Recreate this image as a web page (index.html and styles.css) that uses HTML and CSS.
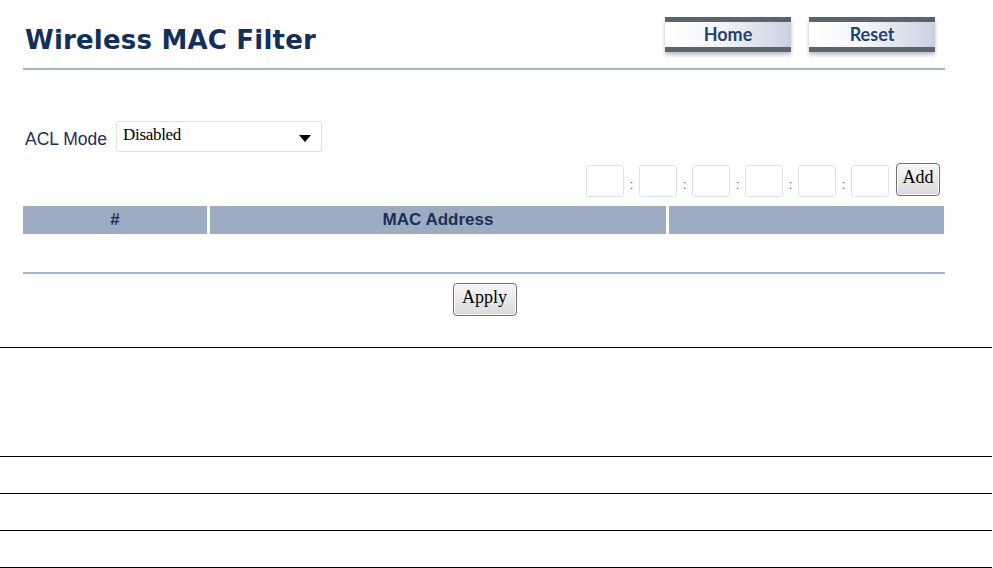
FILE: index.html
```html
<!DOCTYPE html>
<html lang="en">
<head>
<meta charset="utf-8">
<title>Wireless MAC Filter</title>
<link rel="stylesheet" href="styles.css">
</head>
<body>
<div class="page">
  <div class="header">
    <h1 class="title">Wireless MAC Filter</h1>
    <div class="nav">
      <a class="navbtn">Home</a>
      <a class="navbtn">Reset</a>
    </div>
  </div>

  <div class="acl">
    <span class="acl-label">ACL Mode</span>
    <div class="select">
      <span class="select-text">Disabled</span>
      <svg class="select-arrow" width="12" height="7" viewBox="0 0 12 7"><path d="M0 0 H12 L6 7 Z" fill="#000"/></svg>
    </div>
  </div>

  <div class="macrow">
    <span class="macbox"></span><span class="colon">:</span>
    <span class="macbox"></span><span class="colon">:</span>
    <span class="macbox"></span><span class="colon">:</span>
    <span class="macbox"></span><span class="colon">:</span>
    <span class="macbox"></span><span class="colon">:</span>
    <span class="macbox"></span>
    <button class="btn add">Add</button>
  </div>

  <div class="table">
    <div class="th">#</div>
    <div class="th">MAC Address</div>
    <div class="th"></div>
  </div>
  <div class="emptyrow"></div>
  <div class="rule"></div>

  <div class="apply-row">
    <button class="btn apply">Apply</button>
  </div>
</div>

<div class="doclines">
  <div class="docrow tall"></div>
  <div class="docrow"></div>
  <div class="docrow"></div>
  <div class="docrow"></div>
</div>
</body>
</html>
```

FILE: styles.css
```css
html, body {
  margin: 0;
  padding: 0;
  background: #ffffff;
}

.page {
  margin-left: 23px;
  width: 922px;
}

.header {
  display: flex;
  justify-content: space-between;
  align-items: flex-start;
  height: 68px;
  border-bottom: 2px solid #a6b4ca;
}

.title {
  margin: 0;
  padding: 25px 0 0 2px;
  font-family: "DejaVu Sans", Verdana, sans-serif;
  font-weight: bold;
  font-size: 26px;
  line-height: 30px;
  color: #13305c;
  letter-spacing: 0.2px;
}

.nav {
  display: flex;
  gap: 18px;
  margin-top: 17px;
  margin-right: 10px;
}

.navbtn {
  display: flex;
  align-items: center;
  justify-content: center;
  box-sizing: border-box;
  width: 126px;
  height: 35px;
  border-top: 5px solid #5b636d;
  border-bottom: 5px solid #5b636d;
  background: linear-gradient(to right, #ffffff 0%, #f3f5f9 45%, #c9d2e0 100%);
  box-shadow: 0 3px 4px rgba(60, 70, 90, 0.35);
  font-family: "Lato", "DejaVu Sans", sans-serif;
  font-weight: bold;
  font-size: 18px;
  color: #24426e;
  padding-bottom: 2px;
}

.acl {
  display: flex;
  align-items: flex-end;
  margin-top: 51px;
  padding-left: 2px;
}

.acl-label {
  font-family: "Liberation Sans", Arial, sans-serif;
  font-size: 17.5px;
  line-height: 20px;
  color: #1c2f58;
  padding-bottom: 3px;
  margin-right: 9px;
}

.select {
  display: flex;
  align-items: flex-start;
  justify-content: space-between;
  box-sizing: border-box;
  width: 206px;
  height: 31px;
  border: 1px solid #dfe3e8;
  border-radius: 2px;
  padding: 3px 10px 0 6px;
}

.select-text {
  font-family: "Liberation Serif", "Times New Roman", serif;
  font-size: 17px;
  line-height: 20px;
  color: #000;
  letter-spacing: -0.3px;
}

.select-arrow {
  margin-top: 10px;
}

.macrow {
  display: flex;
  justify-content: flex-end;
  align-items: flex-start;
  margin-top: 11px;
  padding-right: 5px;
  height: 34px;
}

.macbox {
  box-sizing: border-box;
  width: 38px;
  height: 32px;
  border: 1px solid #dde1e8;
  border-radius: 3px;
  margin-top: 2px;
}

.colon {
  width: 15px;
  text-align: center;
  font-family: "Liberation Sans", Arial, sans-serif;
  font-size: 13px;
  line-height: 16px;
  color: #555a70;
  margin-top: 14px;
}

.btn {
  box-sizing: border-box;
  border: 1px solid #707070;
  border-radius: 4px;
  background: linear-gradient(to bottom, #f6f6f6 0%, #e9e9e9 50%, #d9d9d9 100%);
  font-family: "Liberation Serif", "Times New Roman", serif;
  font-size: 18px;
  color: #000;
  padding: 0;
  box-shadow: inset 0 0 0 1px #fbfbfb;
}

.add {
  width: 44px;
  height: 33px;
  margin-left: 7px;
  line-height: 22px;
  padding-bottom: 6px;
}

.table {
  display: grid;
  grid-template-columns: 184px 456px 275px;
  column-gap: 3px;
  margin-top: 9px;
  width: 921px;
}

.th {
  background: #9eacc3;
  height: 28px;
  display: flex;
  align-items: center;
  justify-content: center;
  font-family: "Liberation Sans", Arial, sans-serif;
  font-weight: bold;
  font-size: 17px;
  color: #1b2f58;
}

.emptyrow {
  height: 38px;
}

.rule {
  height: 2px;
  background: #a6b4ca;
  width: 922px;
}

.apply-row {
  display: flex;
  justify-content: center;
  padding-top: 9px;
  padding-left: 1px;
}

.apply {
  width: 64px;
  height: 33px;
  line-height: 22px;
  padding-bottom: 5px;
}

.doclines {
  margin-top: 31px;
  width: 992px;
}

.docrow {
  height: 36px;
  border-top: 1px solid #000;
}

.docrow.tall {
  height: 108px;
}

.docrow:last-child {
  border-bottom: 1px solid #000;
}
```
